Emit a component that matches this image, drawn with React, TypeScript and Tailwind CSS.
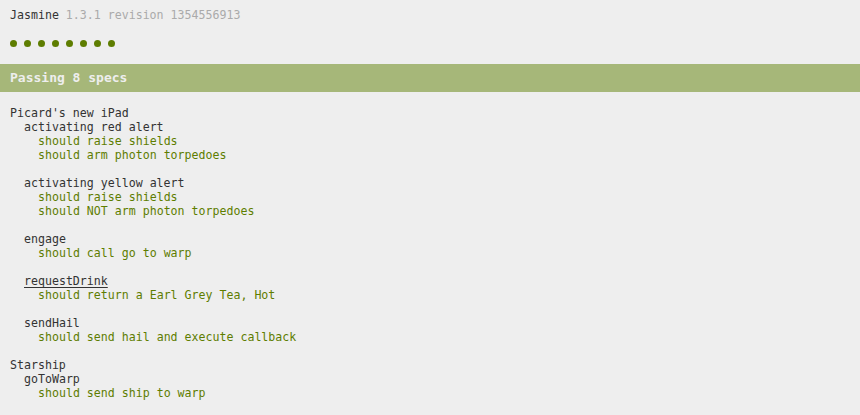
type Spec = string
type Suite = { name: string; link?: boolean; specs?: Spec[]; suites?: Suite[] }

const SUITES: Suite[] = [
  {
    name: "Picard's new iPad",
    suites: [
      { name: 'activating red alert', specs: ['should raise shields', 'should arm photon torpedoes'] },
      { name: 'activating yellow alert', specs: ['should raise shields', 'should NOT arm photon torpedoes'] },
      { name: 'engage', specs: ['should call go to warp'] },
      { name: 'requestDrink', link: true, specs: ['should return a Earl Grey Tea, Hot'] },
      { name: 'sendHail', specs: ['should send hail and execute callback'] },
    ],
  },
  {
    name: 'Starship',
    suites: [{ name: 'goToWarp', specs: ['should send ship to warp'] }],
  },
]

function SuiteView({ suite, first }: { suite: Suite; first: boolean }) {
  return (
    <div className={first ? '' : 'mt-[14px]'}>
      <div className={suite.link ? 'text-[#333] underline underline-offset-2' : 'text-[#333]'}>{suite.name}</div>
      <div className="pl-[14px]">
        {suite.specs?.map((s, i) => (
          <div key={i} className="text-[#5e7d00]">{s}</div>
        ))}
        {suite.suites?.map((s, i) => (
          <SuiteView key={i} suite={s} first={i === 0} />
        ))}
      </div>
    </div>
  )
}

export default function App() {
  return (
    <div
      className="min-h-screen bg-[#eeeeee] text-[11.6px] leading-[14px] text-[#333] pt-2"
      style={{ fontFamily: '"DejaVu Sans Mono", "Liberation Mono", monospace' }}
    >
      {/* banner */}
      <div className="px-[10px]">
        <span className="text-[#333]">Jasmine</span>{' '}
        <span className="text-[#aaa]">1.3.1 revision 1354556913</span>
      </div>

      {/* symbol summary */}
      <div className="mt-[14px] px-[10px] h-[14px] flex items-center">
        {Array.from({ length: 8 }).map((_, i) => (
          <span key={i} className="w-[7px] h-[7px] rounded-full bg-[#5e7d00] mr-[7px]" />
        ))}
      </div>

      {/* alert bar */}
      <div className="mt-[14px] h-[28px] bg-[#a6b779] text-[#eee] font-bold text-[13px] leading-[28px] pl-[10px]">
        Passing 8 specs
      </div>

      {/* results */}
      <div className="mt-[14px] px-[10px]">
        {SUITES.map((s, i) => (
          <SuiteView key={i} suite={s} first={i === 0} />
        ))}
      </div>
    </div>
  )
}
